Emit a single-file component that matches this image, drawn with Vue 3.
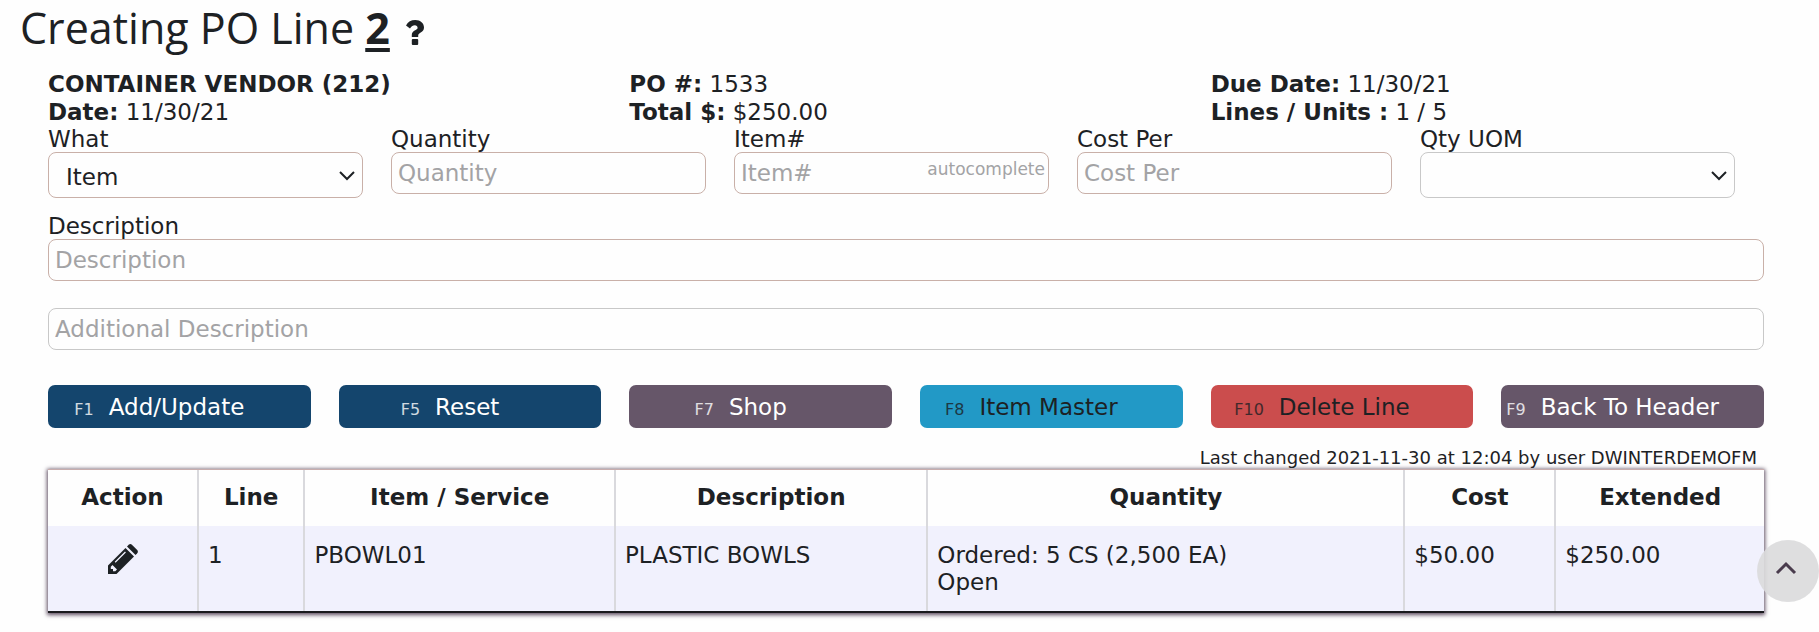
<script setup>
import { ref } from 'vue'

const what = ref('Item')
const uom = ref('')
const actions = [
  { key: 'F1', label: 'Add/Update', tone: 'navy' },
  { key: 'F5', label: 'Reset', tone: 'navy' },
  { key: 'F7', label: 'Shop', tone: 'plum' },
  { key: 'F8', label: 'Item Master', tone: 'sky' },
  { key: 'F10', label: 'Delete Line', tone: 'red' },
  { key: 'F9', label: 'Back To Header', tone: 'plum' },
]
const columns = ['Action', 'Line', 'Item / Service', 'Description', 'Quantity', 'Cost', 'Extended']
const lines = [
  { line: 1, item: 'PBOWL01', description: 'PLASTIC BOWLS', ordered: 'Ordered: 5 CS (2,500 EA)', status: 'Open', cost: '$50.00', extended: '$250.00' },
]
</script>

<template>
  <main class="page">
    <h1 class="title">
      <span>Creating PO Line <b class="number">2</b></span>
      <button class="help" type="button" aria-label="Help">
        <svg viewBox="0 0 18 25" width="18" height="25" aria-hidden="true">
          <path d="M0 5.500C2 1.800 5 0 9.300 0C14.500 0 18 3.200 18 7.500C18 12.500 12.200 12.700 12.200 15.500V17H5.800V15C5.800 10 11.600 10.500 11.600 7.700C11.600 6.200 10.400 5.300 8.900 5.300C6.900 5.300 5.500 6.300 4 8.600Z" fill="currentColor" />
          <rect x="5.800" y="19" width="6.400" height="6" rx="1" fill="currentColor" />
        </svg>
      </button>
    </h1>

    <div class="content">
      <section class="summary">
        <div>
          <div><b>CONTAINER VENDOR (212)</b></div>
          <div><b>Date:</b> 11/30/21</div>
        </div>
        <div>
          <div><b>PO #:</b> 1533</div>
          <div><b>Total $:</b> $250.00</div>
        </div>
        <div>
          <div><b>Due Date:</b> 11/30/21</div>
          <div><b>Lines / Units :</b> 1 / 5</div>
        </div>
      </section>

      <form @submit.prevent>
        <div class="fields">
          <div class="field">
            <label for="what">What</label>
            <div class="picker">
              <select id="what" v-model="what" class="control required">
                <option>Item</option>
                <option>Service</option>
              </select>
              <svg class="arrow" viewBox="0 0 18 12" width="18" height="12" aria-hidden="true"><path d="M2 2l7 7 7-7" /></svg>
            </div>
          </div>
          <div class="field">
            <label for="quantity">Quantity</label>
            <input id="quantity" class="control required" type="text" placeholder="Quantity">
          </div>
          <div class="field">
            <label for="item">Item#</label>
            <div class="picker">
              <input id="item" class="control required" type="text" placeholder="Item#">
              <span class="hint">autocomplete</span>
            </div>
          </div>
          <div class="field">
            <label for="cost">Cost Per</label>
            <input id="cost" class="control required" type="text" placeholder="Cost Per">
          </div>
          <div class="field">
            <label for="uom">Qty UOM</label>
            <div class="picker">
              <select id="uom" v-model="uom" class="control">
                <option value=""></option>
                <option>EA</option>
                <option>CS</option>
              </select>
              <svg class="arrow" viewBox="0 0 18 12" width="18" height="12" aria-hidden="true"><path d="M2 2l7 7 7-7" /></svg>
            </div>
          </div>
        </div>

        <div class="field description">
          <label for="description">Description</label>
          <input id="description" class="control required" type="text" placeholder="Description">
        </div>
        <input class="control additional" type="text" placeholder="Additional Description" aria-label="Additional Description">

        <div class="actions">
          <button v-for="a in actions" :key="a.key" type="button" class="action" :class="a.tone">
            <span class="key">{{ a.key }}</span><span>{{ a.label }}</span>
          </button>
        </div>
      </form>

      <p class="changed">Last changed 2021-11-30 at 12:04 by user DWINTERDEMOFM</p>
      <div class="panel">
        <table class="lines">
          <colgroup>
            <col class="c-action"><col class="c-line"><col class="c-item"><col class="c-desc"><col class="c-qty"><col class="c-cost"><col>
          </colgroup>
          <thead>
            <tr><th v-for="c in columns" :key="c" scope="col">{{ c }}</th></tr>
          </thead>
          <tbody>
            <tr v-for="l in lines" :key="l.line">
              <td class="edit-cell">
                <button class="edit" type="button" aria-label="Edit line">
                  <svg viewBox="0 0 30 30" width="30" height="30" aria-hidden="true">
                    <path fill="currentColor" fill-rule="evenodd" d="M0 30V21.500L17.500 4L26 12.500L8.500 30ZM2.800 22.700V25H5V27.200H7.300L9 25.500L4.500 21ZM17 7.500L6.700 17.800L7.600 18.700L17.900 8.400Z" />
                    <path fill="currentColor" d="M19 2.500L20.700 .8Q22.300-.6 23.900.8L29.200 6.100Q30.600 7.700 29.200 9.300L27.500 11Z" />
                  </svg>
                </button>
              </td>
              <td>{{ l.line }}</td>
              <td>{{ l.item }}</td>
              <td>{{ l.description }}</td>
              <td>{{ l.ordered }}<br>{{ l.status }}</td>
              <td>{{ l.cost }}</td>
              <td>{{ l.extended }}</td>
            </tr>
          </tbody>
        </table>
      </div>
    </div>

    <button class="to-top" type="button" aria-label="Back to top">
      <svg viewBox="0 0 22 14" width="22" height="14" aria-hidden="true"><path d="M2 12l9-9 9 9" /></svg>
    </button>
  </main>
</template>

<style>
body {
  margin: 0;
  background: #fefefe;
}
</style>

<style scoped>
* {
  box-sizing: border-box;
}
.page {
  padding: 0 55px 24px 20px;
  color: #1d2124;
  font: 23px/28px Verdana, "DejaVu Sans", sans-serif;
}
.title {
  display: flex;
  align-items: center;
  gap: 16px;
  margin: 0;
  font: 400 43px/56px "Segoe UI", "Open Sans", sans-serif;
}
.number {
  font-weight: 700;
  text-decoration: underline;
  text-decoration-thickness: 4px;
  text-underline-offset: 4px;
}
button {
  padding: 0;
  border: 0;
  background: none;
  color: inherit;
  font: inherit;
  cursor: pointer;
}
.help,
.edit {
  display: inline-flex;
}
.help {
  padding-top: 8px;
}
.content {
  padding: 14px 0 0 28px;
}
.summary {
  display: grid;
  grid-template-columns: repeat(3, 1fr);
  gap: 28px;
}
.fields {
  display: grid;
  grid-template-columns: repeat(5, 1fr);
  align-items: start;
  gap: 28px;
  padding-right: 29px;
}
.field {
  display: flex;
  flex-direction: column;
}
label {
  line-height: 26px;
}
.picker {
  position: relative;
}
.control {
  display: block;
  width: 100%;
  height: 42px;
  padding: 0 6px 1px;
  border: 1px solid #c8c8c8;
  border-radius: 8px;
  background: #fefefe;
  color: inherit;
  font: inherit;
}
.control::placeholder {
  color: #a3a3a5;
  opacity: 1;
}
.required {
  border-color: #c9b0a8;
}
select.control {
  height: 46px;
  padding: 3px 36px 0 17px;
  appearance: none;
}
.arrow {
  position: absolute;
  right: 7px;
  top: 18px;
  pointer-events: none;
}
.arrow path {
  fill: none;
  stroke: #1d2124;
  stroke-width: 2;
}
.hint {
  position: absolute;
  top: 4px;
  right: 4px;
  color: #a3a3a5;
  font-size: 17px;
  line-height: 26px;
}
.description {
  margin-top: 15px;
}
.additional {
  margin-top: 27px;
}
.actions {
  display: grid;
  grid-template-columns: repeat(6, 1fr);
  gap: 28px;
  margin-top: 35px;
}
.action {
  display: flex;
  align-items: baseline;
  justify-content: center;
  gap: 15px;
  height: 43px;
  padding: 8px 40px 0 0;
  border-radius: 7px;
  white-space: nowrap;
}
.key {
  font-size: 16px;
  opacity: .8;
}
.navy {
  background: #14456d;
  color: #fff;
}
.plum {
  background: #665669;
  color: #fff;
}
.sky {
  background: #2299c6;
}
.red {
  background: #cb4d4d;
}
.changed {
  margin: 19px 0 0;
  padding-right: 7px;
  font-size: 18px;
  line-height: 22px;
  text-align: right;
}
.panel {
  border-top: 1px solid #c8adad;
  border-bottom: 2px solid #1a1a1e;
  box-shadow: 0 1px 4px 1px #5d4c60;
}
.lines {
  width: 100%;
  table-layout: fixed;
  border-spacing: 0;
}
.c-action, .c-cost {
  width: 8.8%;
}
.c-line {
  width: 6.2%;
}
.c-item {
  width: 18.1%;
}
.c-desc {
  width: 18.2%;
}
.c-qty {
  width: 27.8%;
}
th,
td {
  padding: 16px 9px 15px;
  border-right: 2px solid #d9d9dd;
  text-align: left;
  vertical-align: top;
  line-height: 27px;
}
th {
  padding: 14px 9px 15px;
  background: #fefefe;
  text-align: center;
}
th:last-child,
td:last-child {
  border-right: 0;
}
td {
  background: #f1f1fd;
}
.edit-cell {
  padding-top: 18px;
  text-align: center;
}
.to-top {
  position: fixed;
  right: 0;
  bottom: 30px;
  display: flex;
  align-items: center;
  justify-content: center;
  width: 62px;
  height: 62px;
  padding: 0 4px 6px 0;
  border-radius: 50%;
  background: rgba(218, 218, 220, .9);
}
.to-top path {
  fill: none;
  stroke: #4a3c4d;
  stroke-width: 3;
}
</style>
